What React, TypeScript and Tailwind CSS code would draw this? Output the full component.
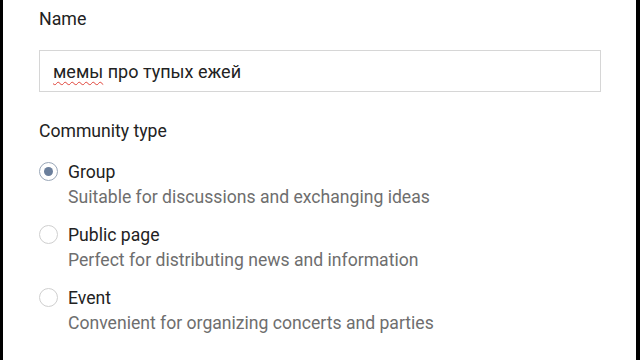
import React from 'react';

const options = [
  { title: 'Group', desc: 'Suitable for discussions and exchanging ideas', checked: true },
  { title: 'Public page', desc: 'Perfect for distributing news and information', checked: false },
  { title: 'Event', desc: 'Convenient for organizing concerts and parties', checked: false },
];

function Radio({ checked }: { checked: boolean }) {
  return (
    <span
      className={`flex h-[19px] w-[19px] shrink-0 items-center justify-center rounded-full border-[1.5px] bg-white ${
        checked ? 'border-[#9aa7b8]' : 'border-[#cfcfcf]'
      }`}
    >
      {checked && <span className="h-[9px] w-[9px] rounded-full bg-[#6b7f9c]" />}
    </span>
  );
}

export default function App() {
  return (
    <div className="flex h-[360px] w-[640px] bg-black" style={{ fontFamily: 'Roboto, sans-serif' }}>
      <div className="ml-[3px] mr-[4px] flex-1 bg-white pl-[36px] pr-[35px] pt-[8px]">
        {/* Name */}
        <div className="text-[17.8px] leading-[22px] text-[#222]">Name</div>
        <div className="mt-[20px] flex h-[42px] items-center border border-[#d6d6d6] px-[13px] text-[18px] text-[#222]">
          <span className="underline decoration-wavy decoration-[#e0443a] decoration-1 underline-offset-[3px]">мемы</span>
          <span>&nbsp;про тупых ежей</span>
        </div>

        {/* Community type */}
        <div className="mt-[28px] text-[17.6px] leading-[22px] text-[#222]">Community type</div>
        <div className="mt-[18px] flex flex-col gap-[14px]">
          {options.map((o) => (
            <div key={o.title} className="flex gap-[10px]">
              <div className="pt-[2px]">
                <Radio checked={o.checked} />
              </div>
              <div className="flex flex-col">
                <span className="text-[17.6px] leading-[25px] text-[#222]">{o.title}</span>
                <span className="text-[17.6px] leading-[24px] text-[#6e6e6e]">{o.desc}</span>
              </div>
            </div>
          ))}
        </div>
      </div>
    </div>
  );
}
